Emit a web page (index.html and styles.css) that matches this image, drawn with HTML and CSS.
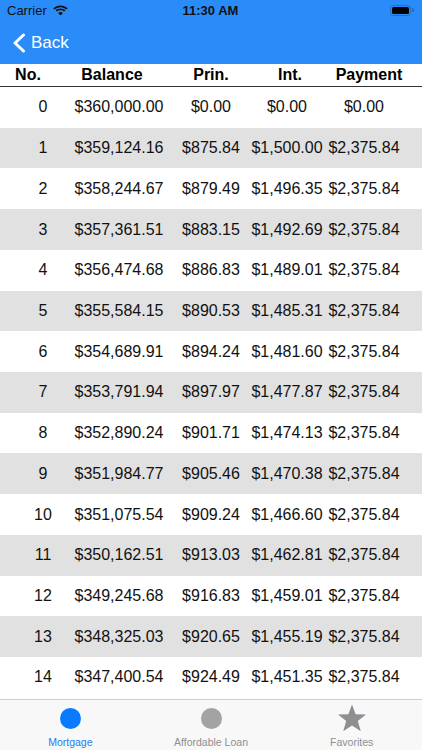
FILE: index.html
```html
<!DOCTYPE html>
<html lang="en">
<head>
    <meta charset="UTF-8">
    <meta name="viewport" content="width=device-width, initial-scale=1.0">
    <title>Amortization Schedule</title>
    <link rel="stylesheet" href="styles.css">
</head>
<body>
    <div class="app">
        <!-- Top: status bar + navigation -->
        <header class="top">
            <div class="status-bar">
                <div class="status-left">
                    <span>Carrier</span>
                    <svg class="wifi" width="15" height="11" viewBox="0 0 15 11">
                        <path d="M7.5 2.2c2.3 0 4.4.9 6 2.4l1.2-1.3C12.8 1.5 10.3.4 7.5.4S2.2 1.5.3 3.3l1.2 1.3c1.6-1.5 3.7-2.4 6-2.4z" fill="#111"/>
                        <path d="M7.5 5.2c1.4 0 2.7.5 3.7 1.4l1.2-1.3C11.1 4.1 9.4 3.4 7.5 3.4S3.9 4.1 2.6 5.3l1.2 1.3c1-.9 2.3-1.4 3.7-1.4z" fill="#111"/>
                        <path d="M7.5 10.6 9.9 8c-.6-.6-1.5-1-2.4-1s-1.8.4-2.4 1z" fill="#111"/>
                    </svg>
                </div>
                <div class="status-time">11:30 AM</div>
                <div class="status-right">
                    <span class="battery"><span class="battery-level"></span></span>
                    <span class="battery-nub"></span>
                </div>
            </div>
            <nav class="nav-bar">
                <a class="back" href="#">
                    <svg width="14" height="20" viewBox="0 0 14 20">
                        <polyline points="11.5,2 3,10 11.5,18" fill="none" stroke="#fff" stroke-width="3" stroke-linecap="round" stroke-linejoin="round"/>
                    </svg>
                    <span>Back</span>
                </a>
            </nav>
        </header>

        <div class="table-head">
            <div class="head-cell">No.</div>
            <div class="head-cell">Balance</div>
            <div class="head-cell">Prin.</div>
            <div class="head-cell">Int.</div>
            <div class="head-cell">Payment</div>
        </div>

        <div class="rows" id="rows">
            <!-- rows filled by script -->
        </div>

        <!-- Tab bar -->
        <footer class="tab-bar">
            <div class="tab active">
                <span class="tab-dot"></span>
                <span class="tab-label">Mortgage</span>
            </div>
            <div class="tab">
                <span class="tab-dot"></span>
                <span class="tab-label">Affordable Loan</span>
            </div>
            <div class="tab">
                <svg class="tab-star" width="30" height="28" viewBox="0 0 30 28">
                    <polygon points="15,0.5 18.6,10.2 29,10.6 20.8,17 23.8,27.2 15,21.4 6.2,27.2 9.2,17 1,10.6 11.4,10.2" fill="#8e8e93"/>
                </svg>
                <span class="tab-label">Favorites</span>
            </div>
        </footer>
    </div>

    <script>
        const schedule = [
            ['0', '$360,000.00', '$0.00', '$0.00', '$0.00'],
            ['1', '$359,124.16', '$875.84', '$1,500.00', '$2,375.84'],
            ['2', '$358,244.67', '$879.49', '$1,496.35', '$2,375.84'],
            ['3', '$357,361.51', '$883.15', '$1,492.69', '$2,375.84'],
            ['4', '$356,474.68', '$886.83', '$1,489.01', '$2,375.84'],
            ['5', '$355,584.15', '$890.53', '$1,485.31', '$2,375.84'],
            ['6', '$354,689.91', '$894.24', '$1,481.60', '$2,375.84'],
            ['7', '$353,791.94', '$897.97', '$1,477.87', '$2,375.84'],
            ['8', '$352,890.24', '$901.71', '$1,474.13', '$2,375.84'],
            ['9', '$351,984.77', '$905.46', '$1,470.38', '$2,375.84'],
            ['10', '$351,075.54', '$909.24', '$1,466.60', '$2,375.84'],
            ['11', '$350,162.51', '$913.03', '$1,462.81', '$2,375.84'],
            ['12', '$349,245.68', '$916.83', '$1,459.01', '$2,375.84'],
            ['13', '$348,325.03', '$920.65', '$1,455.19', '$2,375.84'],
            ['14', '$347,400.54', '$924.49', '$1,451.35', '$2,375.84']
        ];

        function populateRows() {
            const rows = document.getElementById('rows');
            rows.innerHTML = '';
            schedule.forEach(values => {
                const cells = values.map(v => `<div class="cell"><span>${v}</span></div>`).join('');
                rows.innerHTML += `<div class="row">${cells}</div>`;
            });
        }

        populateRows();
    </script>
</body>
</html>
```

FILE: styles.css
```css
body {
    margin: 0;
    padding: 0;
    font-family: "Liberation Sans", Arial, sans-serif;
    color: #111;
    background-color: #ffffff;
}
.app {
    height: 750px;
    display: flex;
    flex-direction: column;
    overflow: hidden;
}
.top {
    background-color: #2a8cf9;
}
.status-bar {
    height: 20px;
    display: flex;
    align-items: center;
    justify-content: space-between;
    padding: 0 8px 0 7px;
    font-size: 13px;
}
.status-left {
    display: flex;
    align-items: center;
    gap: 6px;
    width: 100px;
}
.status-time {
    font-weight: bold;
}
.status-right {
    width: 100px;
    display: flex;
    justify-content: flex-end;
    align-items: center;
}
.battery {
    width: 17px;
    height: 7px;
    border: 1.5px solid #1f6fc7;
    border-radius: 3px;
    padding: 1px;
    display: flex;
}
.battery-level {
    flex: 1;
    background-color: #000;
    border-radius: 1.5px;
}
.battery-nub {
    width: 1.5px;
    height: 4px;
    margin-left: 1px;
    background-color: #1f6fc7;
    border-radius: 0 1px 1px 0;
}
.nav-bar {
    height: 44px;
    display: flex;
    align-items: center;
    padding-left: 12px;
}
.back {
    display: flex;
    align-items: center;
    gap: 5px;
    color: #ffffff;
    font-size: 17px;
    text-decoration: none;
    margin-top: 2px;
}
.table-head {
    height: 22px;
    display: grid;
    grid-template-columns: 56px 112px 86px 72px 86px;
    align-items: center;
    border-bottom: 1.5px solid #333;
    font-size: 16px;
    font-weight: bold;
    color: #000;
}
.head-cell {
    text-align: center;
}
.rows {
    display: flex;
    flex-direction: column;
}
.row {
    height: 40.73px;
    display: grid;
    grid-template-columns: 60px 92px 92px 60px 94px;
    padding-left: 13px;
    align-items: center;
    font-size: 16px;
    color: #111;
}
.row:nth-child(even) {
    background-color: #e1e1e1;
}
.cell {
    display: flex;
    justify-content: center;
    white-space: nowrap;
}
.tab-bar {
    margin-top: auto;
    height: 50px;
    border-top: 1px solid #cfcfcf;
    background-color: #f8f8f8;
    display: flex;
}
.tab {
    flex: 1;
    display: flex;
    flex-direction: column;
    align-items: center;
    padding-top: 8px;
    color: #8e8e93;
}
.tab-dot {
    width: 21px;
    height: 21px;
    border-radius: 50%;
    background-color: #a3a3a3;
}
.tab-star {
    margin-top: -4px;
    margin-bottom: -3px;
}
.tab-label {
    margin-top: 7px;
    font-size: 10.5px;
}
.tab.active {
    color: #1a7cf5;
}
.tab.active .tab-dot {
    background-color: #0a7aff;
}
```
